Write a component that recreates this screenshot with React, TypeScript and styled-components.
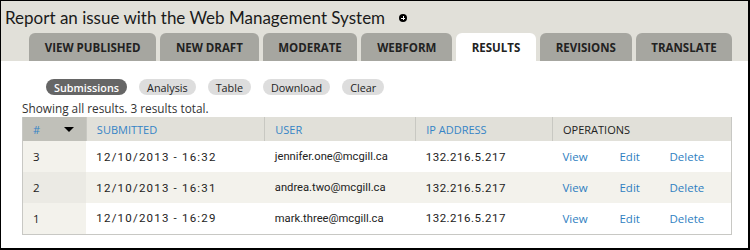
import React from "react";
import styled, { createGlobalStyle } from "styled-components";

const Global = createGlobalStyle`
  html, body { margin: 0; padding: 0; background: #fff; }
  * { box-sizing: border-box; }
`;

const Frame = styled.div`
  width: 750px;
  height: 250px;
  border-style: solid;
  border-color: #000;
  border-width: 1px 2px 2px 1px;
  display: flex;
  flex-direction: column;
  overflow: hidden;
  font-family: "Open Sans", "DejaVu Sans", sans-serif;
`;

const Header = styled.div`
  background: #e1e0d9;
  display: flex;
  flex-direction: column;
`;

const TitleRow = styled.div`
  height: 32px;
  display: flex;
  align-items: center;
  padding-left: 4px;
  gap: 14px;
`;

const Title = styled.h1`
  margin: 0;
  font-family: "Lato", "Open Sans", sans-serif;
  font-size: 17px;
  font-weight: normal;
  color: #1a1a1a;
  line-height: 1;
`;

const PlusIcon = styled.span`
  width: 8px;
  height: 8px;
  border-radius: 50%;
  background: #000;
  position: relative;
  margin-top: 2px;
  &::before, &::after {
    content: "";
    position: absolute;
    background: #fff;
  }
  &::before { left: 2px; top: 3.5px; width: 4px; height: 1px; }
  &::after { left: 3.5px; top: 2px; width: 1px; height: 4px; }
`;

const Tabs = styled.nav`
  display: flex;
  gap: 4px;
  padding-left: 28px;
  height: 28px;
`;

const Tab = styled.div<{ $active?: boolean }>`
  height: 28px;
  padding: 1px 15.7px 0;
  border-radius: 6px 6px 0 0;
  background: ${(p) => (p.$active ? "#fff" : "#a6a6a0")};
  color: #222;
  font-weight: bold;
  font-size: 11.5px;
  display: flex;
  align-items: center;
  justify-content: center;
`;

const Content = styled.div`
  flex: 1;
  padding: 18px 16px 0 21px;
`;

const Pills = styled.div`
  display: flex;
  gap: 12px;
  padding-left: 24px;
  height: 16px;
`;

const Pill = styled.span<{ $active?: boolean }>`
  height: 16px;
  padding: 0 8px;
  border-radius: 8px;
  background: ${(p) => (p.$active ? "#666" : "#dddddd")};
  color: ${(p) => (p.$active ? "#fff" : "#222")};
  font-weight: ${(p) => (p.$active ? 600 : 500)};
  font-size: 10.8px;
  display: flex;
  align-items: center;
`;

const Summary = styled.div`
  font-size: 11.8px;
  color: #333;
  margin-top: 5px;
  height: 17px;
  line-height: 16px;
`;

const Table = styled.table`
  width: 710px;
  border-collapse: collapse;
  border: 1px solid #c8c8c4;
  border-top: none;
`;

const Th = styled.th<{ $sorted?: boolean; $w: number; $plain?: boolean }>`
  width: ${(p) => p.$w}px;
  height: 24px;
  padding: 0 10px;
  text-align: left;
  font-weight: normal;
  font-size: 11px;
  color: ${(p) => (p.$plain ? "#222" : "#3584c6")};
  background: ${(p) => (p.$sorted ? "#c0c0b9" : "#e1e0d9")};
  border-left: 1px solid #c8c8c2;
  &:first-child { border-left: none; }
`;

const SortCell = styled.div`
  display: flex;
  align-items: center;
  justify-content: space-between;
  padding-right: 2px;
`;

const Arrow = styled.span`
  width: 0;
  height: 0;
  border-left: 5px solid transparent;
  border-right: 5px solid transparent;
  border-top: 5px solid #000;
`;

const Tr = styled.tr<{ $odd?: boolean }>`
  background: ${(p) => (p.$odd ? "#f3f2ec" : "#fff")};
`;

type CellFont = "date" | "ip" | "arial" | "sans";

const Td = styled.td<{ $sorted?: boolean; $odd?: boolean; $font?: CellFont }>`
  height: 31px;
  padding: 0 10px;
  font-size: ${(p) => (p.$font === "arial" ? "11.2px" : "11.5px")};
  color: #222;
  background: ${(p) => (p.$sorted ? (p.$odd ? "#ebeae4" : "#f3f2ec") : "transparent")};
  font-family: ${(p) =>
    p.$font === "arial" || p.$font === "date" || p.$font === "ip"
      ? '"Roboto", "Liberation Sans", sans-serif'
      : "inherit"};
  letter-spacing: ${(p) => (p.$font === "date" ? "1.2px" : p.$font === "ip" ? "0.5px" : "0")};
`;

const Ops = styled.div`
  display: flex;
`;

const OpLink = styled.a<{ $w: number }>`
  width: ${(p) => p.$w}px;
  color: #2f7fc1;
  text-decoration: none;
  font-size: 11.5px;
`;

const rows = [
  { n: 3, date: "12/10/2013 - 16:32", user: "jennifer.one@mcgill.ca" },
  { n: 2, date: "12/10/2013 - 16:31", user: "andrea.two@mcgill.ca" },
  { n: 1, date: "12/10/2013 - 16:29", user: "mark.three@mcgill.ca" },
];

export default function App() {
  return (
    <>
      <Global />
      <Frame>
        <Header>
          <TitleRow>
            <Title>Report an issue with the Web Management System</Title>
            <PlusIcon />
          </TitleRow>
          <Tabs>
            {["View published", "New draft", "Moderate", "Webform", "Results", "Revisions", "Translate"].map((t) => (
              <Tab key={t} $active={t === "Results"}>
                {t.toUpperCase()}
              </Tab>
            ))}
          </Tabs>
        </Header>
        <Content>
          <Pills>
            <Pill $active>Submissions</Pill>
            <Pill>Analysis</Pill>
            <Pill>Table</Pill>
            <Pill>Download</Pill>
            <Pill>Clear</Pill>
          </Pills>
          <Summary>Showing all results. 3 results total.</Summary>
          <Table>
            <thead>
              <tr>
                <Th $sorted $w={64}>
                  <SortCell>
                    <span>#</span>
                    <Arrow />
                  </SortCell>
                </Th>
                <Th $w={179}>SUBMITTED</Th>
                <Th $w={151}>USER</Th>
                <Th $w={137}>IP ADDRESS</Th>
                <Th $w={179} $plain>OPERATIONS</Th>
              </tr>
            </thead>
            <tbody>
              {rows.map((r, i) => (
                <Tr key={r.n} $odd={i % 2 === 1}>
                  <Td $sorted $odd={i % 2 === 1}>{r.n}</Td>
                  <Td $font="date">{r.date}</Td>
                  <Td $font="arial">{r.user}</Td>
                  <Td $font="ip">132.216.5.217</Td>
                  <Td>
                    <Ops>
                      <OpLink href="#" $w={57}>View</OpLink>
                      <OpLink href="#" $w={50}>Edit</OpLink>
                      <OpLink href="#" $w={50}>Delete</OpLink>
                    </Ops>
                  </Td>
                </Tr>
              ))}
            </tbody>
          </Table>
        </Content>
      </Frame>
    </>
  );
}
